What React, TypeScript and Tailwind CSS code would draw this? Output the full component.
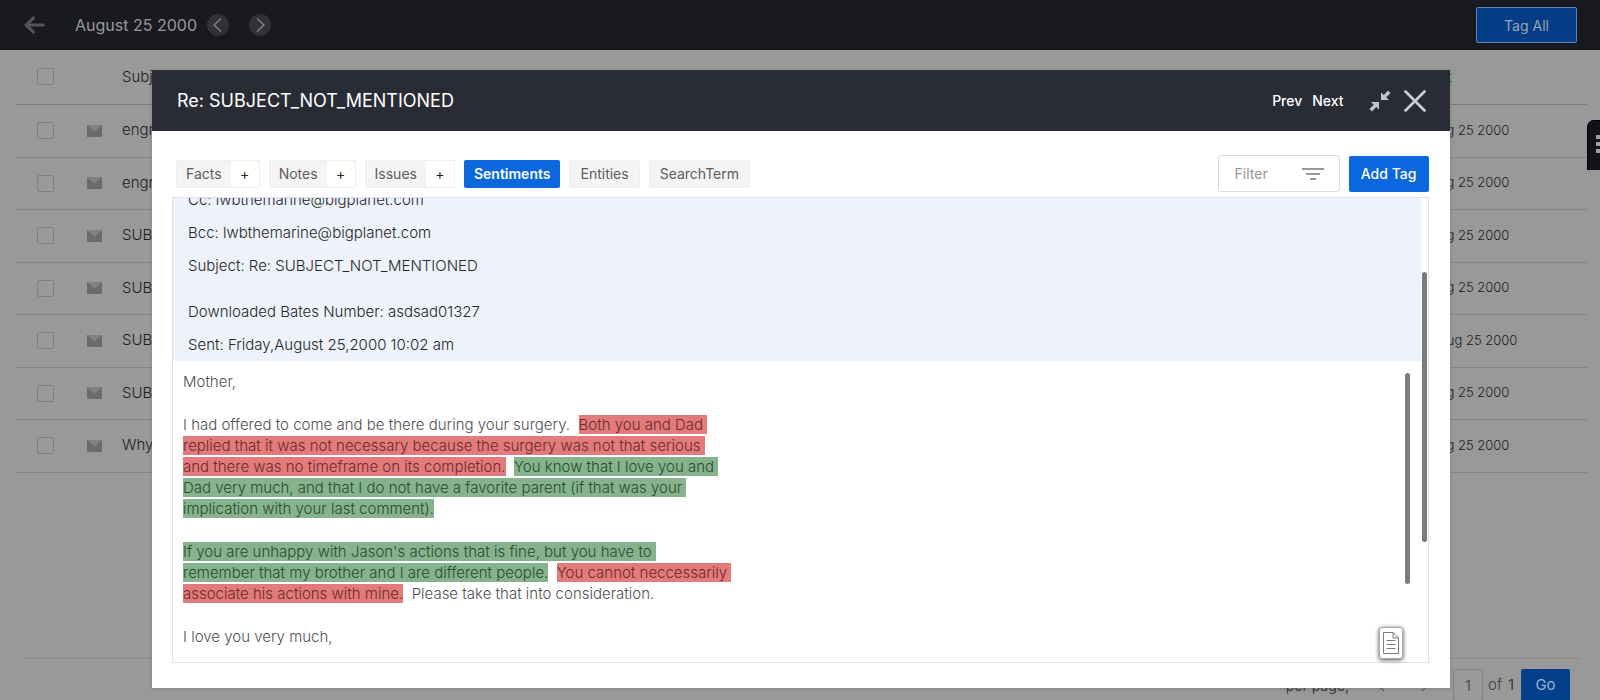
import React from 'react';

const rows = [
  { id: 1, subject: 'engravings', date: 'Aug 25 2000' },
  { id: 2, subject: 'engravings', date: 'Aug 25 2000' },
  { id: 3, subject: 'SUBJECT_NOT_MENTIONED', date: 'Aug 25 2000' },
  { id: 4, subject: 'SUBJECT_NOT_MENTIONED', date: 'Aug 25 2000' },
  { id: 5, subject: 'SUBJECT_NOT_MENTIONED', date: 'Aug 25 2000' },
  { id: 6, subject: 'SUBJECT_NOT_MENTIONED', date: 'Aug 25 2000' },
  { id: 7, subject: 'Why', date: 'Aug 25 2000' },
];

function Chevron({ flip }: { flip?: boolean }) {
  return (
    <svg viewBox="0 0 22 22" className="size-[22px]" fill="none" stroke="#858589" strokeWidth="1.4">
      <path d={flip ? 'M8 4.5 L15 11 L8 17.5' : 'M14 4.5 L7 11 L14 17.5'} />
    </svg>
  );
}

function PagerArrow({ flip }: { flip?: boolean }) {
  return (
    <svg viewBox="0 0 8 14" className="h-[14px] w-2" fill="none" stroke="#666" strokeWidth="1.2">
      <path d={flip ? 'M1 1 L7 7 L1 13' : 'M7 1 L1 7 L7 13'} />
    </svg>
  );
}

function MailIcon() {
  return (
    <svg viewBox="0 0 15 12" className="h-3 w-[15px]">
      <rect width="15" height="12" fill="#6b6b6b" />
      <path d="M0 0 H15 L7.5 6.5 Z" fill="#828282" />
    </svg>
  );
}

function CheckBox({ label }: { label: string }) {
  return (
    <input
      type="checkbox"
      aria-label={label}
      className="block size-[17px] appearance-none rounded-xs border border-[#808080]"
    />
  );
}

function SplitTab({ label }: { label: string }) {
  return (
    <div className="flex h-7 border border-[#efefef] text-[14px]">
      <button className="bg-[#f4f4f4] px-[9px] text-[#5c5c5c]">{label}</button>
      <button aria-label={'Add ' + label} className="w-7 bg-white text-[#222]">
        +
      </button>
    </div>
  );
}

function Tab({ label }: { label: string }) {
  return (
    <button className="h-7 rounded-xs border border-[#efefef] bg-[#f4f4f4] px-[10px] text-[14px] text-[#5c5c5c]">
      {label}
    </button>
  );
}

function Red({ children }: { children: React.ReactNode }) {
  return <mark className="bg-[#e37a7b] text-[#6b2a2c]">{children}</mark>;
}

function Green({ children }: { children: React.ReactNode }) {
  return <mark className="bg-[#84b38c] text-[#2c4a32]">{children}</mark>;
}

function Listing() {
  return (
    <div className="flex h-full flex-col bg-[#999]">
      <header className="flex h-[50px] shrink-0 items-center bg-[#191a20] pr-[23px] pl-6">
        <button aria-label="Back" className="mr-[30px]">
          <svg viewBox="0 0 21 18" className="h-[18px] w-[21px]" fill="none" stroke="#55565b" strokeWidth="3" strokeLinecap="round" strokeLinejoin="round">
            <path d="M9.5 1.8 L2 9 L9.5 16.2 M2.5 9 H19.3" />
          </svg>
        </button>
        <h1 className="w-[132px] text-[16px] whitespace-nowrap text-[#99999b]">August 25 2000</h1>
        <button aria-label="Previous day" className="mr-5 rounded-full bg-[#313237]">
          <Chevron />
        </button>
        <button aria-label="Next day" className="rounded-full bg-[#313237]">
          <Chevron flip />
        </button>
        <button className="ml-auto h-9 w-[101px] rounded-xs border border-[#5e86b8] bg-[#043c85] text-[14px] text-[#9aa5b6]">
          Tag All
        </button>
      </header>
      <div className="pr-[13px] pl-4">
        <table className="w-full table-fixed border-collapse text-left text-[15px] font-light text-[#1c1c1e]">
          <thead>
            <tr className="h-[54px] border-b border-[#7b7d80]">
              <th className="w-[70px] pl-[21px]">
                <CheckBox label="Select all" />
              </th>
              <th className="w-9" />
              <th className="font-light">Subject</th>
              <th className="w-[165px] text-[14px] font-light">Sent</th>
            </tr>
          </thead>
          <tbody>
            {rows.map((row) => (
              <tr key={row.id} className="border-b border-[#858585] odd:h-[53px] even:h-[52px]">
                <td className="pl-[21px]">
                  <CheckBox label={'Select message ' + row.id} />
                </td>
                <td className="pl-px">
                  <MailIcon />
                </td>
                <td>{row.subject}</td>
                <td className={row.id === 5 ? 'pl-4 text-[13px]' : 'pl-2 text-[13px]'}>{row.date}</td>
              </tr>
            ))}
          </tbody>
        </table>
      </div>
      <footer className="mt-auto mr-5 ml-6 flex h-[42px] shrink-0 items-start justify-end border-t border-[#8a8a8a] pt-[10px] pr-[10px] text-[15px] text-[#3c3c3c]">
        <div className="flex h-8 items-center">
          <span className="mr-7 text-[14px]">per page,</span>
          <button aria-label="Previous page" className="mr-9">
            <PagerArrow />
          </button>
          <button aria-label="Next page" className="mr-6">
            <PagerArrow flip />
          </button>
          <input
            aria-label="Page"
            defaultValue="1"
            className="h-8 w-[30px] rounded-xs border border-[#838383] text-center font-light"
          />
          <span className="ml-[5px] flex w-[33px] gap-[6px]">
            <span className="font-light">of</span>
            <span>1</span>
          </span>
          <button className="h-8 w-[49px] rounded-xs bg-[#043f8c] text-[#9fb0c8]">Go</button>
        </div>
      </footer>
    </div>
  );
}

function Message() {
  return (
    <section
      role="dialog"
      aria-label="Message"
      className="absolute top-[70px] right-[9.4%] left-[9.5%] bg-white pb-[25px] shadow-[0_1px_4px_rgba(0,0,0,0.15)]"
    >
      <header className="flex h-[61px] items-center bg-[#292b35] pr-6 pl-[25px] text-white">
        <h2 className="text-[18px]">Re: SUBJECT_NOT_MENTIONED</h2>
        <button className="ml-auto text-[14px] font-medium">Prev</button>
        <button className="ml-[10px] text-[14px] font-medium">Next</button>
        <button aria-label="Shrink" className="ml-[25px]">
          <svg viewBox="0 0 22 22" className="size-[22px]" fill="#c3c4c8">
            <path d="M12 2.5 V10 H20 L17.3 7.3 L21.6 3 L19 0.6 L14.8 5 Z" />
            <path d="M10 19.5 V12 H2 L4.7 14.7 L0.4 19 L3 21.4 L7.2 17 Z" />
          </svg>
        </button>
        <button aria-label="Close" className="ml-[13px]">
          <svg viewBox="0 0 22 22" className="size-[22px]" stroke="#cdcdd4" strokeWidth="2.6" strokeLinecap="round">
            <path d="M1.5 1.5 L20.5 20.5 M20.5 1.5 L1.5 20.5" />
          </svg>
        </button>
      </header>

      <div className="mr-[21px] ml-6 flex items-center gap-[9px] pt-6 pb-[5px]">
        <SplitTab label="Facts" />
        <SplitTab label="Notes" />
        <SplitTab label="Issues" />
        <button className="h-7 rounded-xs bg-[#0a67de] px-[10px] text-[14px] font-semibold text-white">Sentiments</button>
        <Tab label="Entities" />
        <Tab label="SearchTerm" />
        <label className="ml-auto flex h-[37px] w-[122px] items-center rounded-[3px] border border-[#dcdcdc] pr-[15px] pl-4">
          <input
            aria-label="Filter"
            placeholder="Filter"
            className="w-full min-w-0 text-[14px] outline-none placeholder:text-[#969696]"
          />
          <svg viewBox="0 0 22 12" className="h-3 w-[22px] shrink-0" stroke="#77777b" strokeWidth="1.6">
            <path d="M0 1 H22 M4 6 H18 M8 11 H14" />
          </svg>
        </label>
        <button className="h-9 w-20 rounded-xs bg-[#0a67de] text-[14px] font-medium whitespace-nowrap text-white">Add Tag</button>
      </div>

      <div className="relative mr-[21px] ml-5 h-[466px] border border-[#dfe3e8]">
        <div className="mr-[7px] flex h-[163px] flex-col justify-end overflow-hidden bg-[#edf2fb] pl-[15px] text-[15px] leading-[33px] font-light text-[#26262c]">
          <p>Cc: lwbthemarine@bigplanet.com</p>
          <p>Bcc: lwbthemarine@bigplanet.com</p>
          <p className="mb-[13px]">Subject: Re: SUBJECT_NOT_MENTIONED</p>
          <p>Downloaded Bates Number: asdsad01327</p>
          <p>Sent: Friday,August 25,2000 10:02 am</p>
        </div>
        <div className="flex flex-col gap-[22px] pt-[10px] pl-[10px] text-[15px] leading-[21px] font-light whitespace-pre text-[#505053]">
          <p>Mother,</p>
          <p>
            {'I had offered to come and be there during your surgery.  '}
            <Red>{'Both you and Dad \nreplied that it was not necessary because the surgery was not that serious \nand there was no timeframe on its completion.'}</Red>
            {'  '}
            <Green>{'You know that I love you and \nDad very much, and that I do not have a favorite parent (if that was your \nimplication with your last comment).'}</Green>
          </p>
          <p>
            <Green>{"If you are unhappy with Jason's actions that is fine, but you have to \nremember that my brother and I are different people."}</Green>
            {'  '}
            <Red>{'You cannot neccessarily \nassociate his actions with mine.'}</Red>
            {'  Please take that into consideration.'}
          </p>
          <p>I love you very much,</p>
        </div>
        <div className="absolute top-[74px] right-px h-[270px] w-[5px] rounded-full bg-[#7b7b7b]" />
        <div className="absolute top-[175px] right-[18px] h-[211px] w-[5px] rounded-full bg-[#7b7b7b]" />
        <button
          aria-label="Open document"
          className="absolute right-[25px] bottom-[3px] flex h-8 w-6 items-center justify-center rounded-[3px] border border-[#aaa] bg-white shadow-[0_1px_4px_rgba(0,0,0,0.7)]"
        >
          <svg viewBox="0 0 16 22" className="h-[22px] w-4" fill="none" stroke="#7c7c7c" strokeWidth="1">
            <path d="M0.5 0.5 H10 L15.5 6 V21.5 H0.5 Z" />
            <path d="M10 0.5 V6 H15.5 M3.5 8.5 H12.5 M3.5 12.5 H12.5 M3.5 16.5 H12.5" />
          </svg>
        </button>
      </div>
    </section>
  );
}

export default function App() {
  return (
    <main className="relative h-screen min-h-[700px] overflow-hidden font-['Inter','Liberation_Sans',sans-serif]">
      <Listing />
      <Message />
      <button
        aria-label="Open panel"
        className="absolute top-[120px] right-0 flex h-[50px] w-[13px] justify-end rounded-tl-[7px] border-t border-l border-black bg-[#121318] pt-[14px]"
      >
        <svg viewBox="0 0 4 18" className="h-[18px] w-1" fill="#a0a0a0">
          <path d="M0 0 H4 V4 H0 Z M0 7 H4 V11 H0 Z M0 14 H4 V18 H0 Z" />
        </svg>
      </button>
    </main>
  );
}
